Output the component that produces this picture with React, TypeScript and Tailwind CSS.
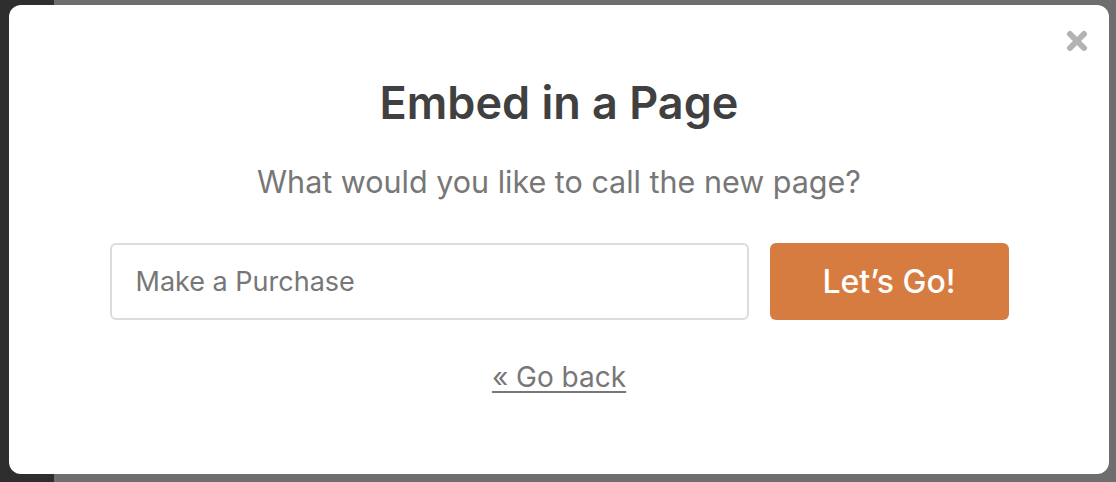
const App = () => {
  return (
    <div className="relative flex h-[482px] w-[1116px] overflow-hidden bg-[#6e6e6e]" style={{ fontFamily: "Inter, 'Noto Sans', sans-serif" }}>
      {/* page behind the overlay */}
      <div className="h-full w-[54px] bg-[#2e2e2e]"></div>
      <div className="flex-1"></div>

      {/* Modal */}
      <div className="absolute left-[9px] top-[5px] flex h-[469px] w-[1100px] flex-col items-center rounded-[12px] bg-white">
        <button className="absolute right-[20px] top-[24px] text-[#b3b3b3]" aria-label="Close">
          <svg width="24" height="24" viewBox="0 0 24 24">
            <path d="M5 5 L19 19 M19 5 L5 19" stroke="currentColor" strokeWidth="6" strokeLinecap="round" />
          </svg>
        </button>

        <h1 className="mt-[71px] text-[45px] font-semibold leading-[54px] text-[#404040]">Embed in a Page</h1>
        <p className="mt-[34px] text-[30.5px] leading-[36px] text-[#777777]">What would you like to call the new page?</p>

        <div className="mt-[43px] flex w-[899px] gap-[21px]">
          <input
            className="h-[77px] flex-1 rounded-[6px] border-2 border-[#dcdcdc] px-[24px] text-[27px] text-[#444] placeholder:text-[#777777] outline-none"
            placeholder="Make a Purchase"
          />
          <button className="h-[77px] w-[239px] rounded-[6px] bg-[#d67c41] text-[32px] font-medium text-white">Let’s Go!</button>
        </div>

        <a href="#" className="mt-[41px] text-[28px] leading-[32px] text-[#777777] underline decoration-2 underline-offset-[4px]">« Go back</a>
      </div>
    </div>
  );
};

export default App;
